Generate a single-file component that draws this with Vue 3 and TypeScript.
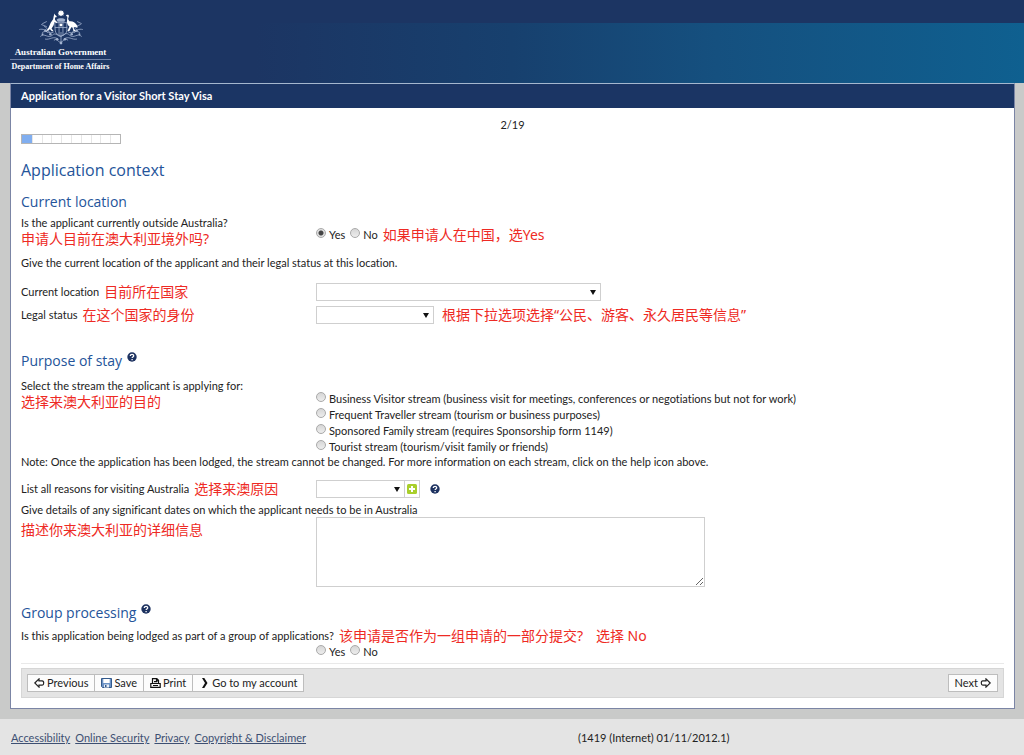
<script setup lang="ts">
import { ref } from 'vue'

const outside = ref('yes')
const stream = ref('')
const group = ref('')
const location = ref('')
const status = ref('')
const reason = ref('')
const details = ref('')

const streams = [
  { id: 'business', label: 'Business Visitor stream (business visit for meetings, conferences or negotiations but not for work)' },
  { id: 'frequent', label: 'Frequent Traveller stream (tourism or business purposes)' },
  { id: 'family', label: 'Sponsored Family stream (requires Sponsorship form 1149)' },
  { id: 'tourist', label: 'Tourist stream (tourism/visit family or friends)' },
]
const footerLinks = ['Accessibility', 'Online Security', 'Privacy', 'Copyright & Disclaimer']
</script>

<template>
  <div class="page">
    <header class="banner">
      <div class="brand">
        <svg class="crest" viewBox="0 0 48 36" aria-hidden="true">
          <g fill="none" stroke="#a3b3cf" stroke-width="0.8" stroke-linecap="round">
            <path d="M3 27c4-4 8 3 12-1s6 2 9 1 5-5 9-1 8-3 12 1M5 23c4-3 7 2 11 0M43 23c-4-3-7 2-11 0M2 20c4-1 6 1 8 3M46 20c-4-1-6 1-8 3M7 17c2 1 4 3 5 6M41 17c-2 1-4 3-5 6M8 30c5 1 8-4 13 0M40 30c-5 1-8-4-13 0M24 23v11M17 31c3-3 4 3 7 2s4-5 7-2M4 15l5 2M44 15l-5 2M41 12l4 2M9 12l-4 2" />
            <path d="M18 13h12v8c0 3-3 5-6 6-3-1-6-3-6-6zM18 18h12M22 13v13M26 13v13" />
          </g>
          <g fill="#a3b3cf">
            <circle cx="8" cy="21" r="1.3" /><circle cx="13" cy="25" r="1.3" /><circle cx="40" cy="21" r="1.3" />
            <circle cx="35" cy="25" r="1.3" /><circle cx="20" cy="30" r="1.3" /><circle cx="28" cy="30" r="1.3" />
            <circle cx="24" cy="34" r="1.4" /><circle cx="5" cy="25" r="1" /><circle cx="43" cy="25" r="1" />
            <path d="M19.500 10c2-2 7-2 9 0l-1 2h-7z" /><circle cx="24" cy="15.500" r="1.500" fill="#fff" />
          </g>
          <path fill="#fff" d="M24 0l.8 1.200 1.500-.4-.2 1.500 1.300.8-1.100 1 .4 1.500-1.600-.2-1.100 1.100-1.100-1.100-1.600.2.4-1.500-1.100-1 1.300-.8-.2-1.500 1.500.4z" />
          <path fill="#fff" d="M17.300 3.500l.7 1.700 1.600 1.300-.3.900-1.500.2.1 2.700 2.300 2.300-.4.700-2.500-1-.9 3.500-2.100 3.200 2.100 2.800h-1.800l-2-2-4.100 2.500 2.800-4.300 2.100-4.800 2.500-3.700.6-3z" />
          <path fill="#fff" d="M29 5.800l1-1 1.500.1.700 1-.9 3.400 1.300 2.300c2.900-.7 5.900 1 7.700 3.900l.7 2.800-2.400-.9-1.500.6.3 1.800 2 2.100h-2.300l-1.300-3.900-1.200-.2-2.100 4.100h-1.900l2.100-4.800c-1.900-1.700-2.700-3.600-2.600-5.600l.5-4.600z" />
        </svg>
        <span class="gov">Australian Government</span>
        <span class="dept">Department of Home Affairs</span>
      </div>
    </header>

    <main class="panel">
      <div class="panel-title">Application for a Visitor Short Stay Visa</div>
      <form class="content" @submit.prevent>
        <div class="count">2/19</div>
        <div class="progress" role="progressbar" aria-label="Progress" aria-valuenow="2" aria-valuemax="19">
          <i v-for="n in 10" :key="n" :class="{ done: n === 1 }"></i>
        </div>
        <h1>Application context</h1>

        <h2>Current location</h2>
        <div class="row outside" role="radiogroup" aria-labelledby="q-outside">
          <div>
            <div id="q-outside">Is the applicant currently outside Australia?</div>
            <div class="note">申请人目前在澳大利亚境外吗?</div>
          </div>
          <div class="options">
            <label><input v-model="outside" type="radio" name="outside" value="yes" />Yes</label>
            <label><input v-model="outside" type="radio" name="outside" value="no" />No</label>
            <span class="note">如果申请人在中国，选Yes</span>
          </div>
        </div>
        <p class="give">Give the current location of the applicant and their legal status at this location.</p>
        <div class="row location">
          <div class="caption"><label for="location">Current location</label><span class="note">目前所在国家</span></div>
          <div class="select wide"><select id="location" v-model="location"><option value=""></option></select></div>
        </div>
        <div class="row status">
          <div class="caption"><label for="status">Legal status</label><span class="note">在这个国家的身份</span></div>
          <div class="field">
            <div class="select medium"><select id="status" v-model="status"><option value=""></option></select></div>
            <span class="note">根据下拉选项选择“公民、游客、永久居民等信息”</span>
          </div>
        </div>

        <h2 class="purpose">
          Purpose of stay
          <button type="button" class="help" aria-label="Help"><svg viewBox="0 0 10 10"><circle cx="5" cy="5" r="4.700" fill="#1d3260" /><path d="M3.300 4C3.300 1.800 6.800 1.900 6.700 3.900 6.600 5 5.100 4.900 5.100 6.100M5.100 7v1.200" fill="none" stroke="#fff" stroke-width="1.300" /></svg></button>
        </h2>
        <div class="row streams" role="radiogroup" aria-labelledby="q-stream">
          <div>
            <div id="q-stream">Select the stream the applicant is applying for:</div>
            <div class="note">选择来澳大利亚的目的</div>
          </div>
          <div class="stream-list">
            <label v-for="s in streams" :key="s.id"><input v-model="stream" type="radio" name="stream" :value="s.id" />{{ s.label }}</label>
          </div>
        </div>
        <p class="remark">Note: Once the application has been lodged, the stream cannot be changed. For more information on each stream, click on the help icon above.</p>
        <div class="row reasons">
          <div class="caption"><label for="reason">List all reasons for visiting Australia</label><span class="note">选择来澳原因</span></div>
          <div class="field reason-field">
            <div class="select small"><select id="reason" v-model="reason"><option value=""></option></select></div>
            <button type="button" class="add" aria-label="Add reason"><svg viewBox="0 0 10 10"><rect width="10" height="10" rx="1.500" fill="#a9cf2b" /><path d="M5 2v6M2 5h6" stroke="#fff" stroke-width="2" /></svg></button>
            <button type="button" class="help" aria-label="Help"><svg viewBox="0 0 10 10"><circle cx="5" cy="5" r="4.700" fill="#1d3260" /><path d="M3.300 4C3.300 1.800 6.800 1.900 6.700 3.900 6.600 5 5.100 4.900 5.100 6.100M5.100 7v1.200" fill="none" stroke="#fff" stroke-width="1.300" /></svg></button>
          </div>
        </div>
        <label class="details-label" for="details">Give details of any significant dates on which the applicant needs to be in Australia</label>
        <div class="row details">
          <div class="note">描述你来澳大利亚的详细信息</div>
          <textarea id="details" v-model="details"></textarea>
        </div>

        <h2 class="group">
          Group processing
          <button type="button" class="help" aria-label="Help"><svg viewBox="0 0 10 10"><circle cx="5" cy="5" r="4.700" fill="#1d3260" /><path d="M3.300 4C3.300 1.800 6.800 1.900 6.700 3.900 6.600 5 5.100 4.900 5.100 6.100M5.100 7v1.200" fill="none" stroke="#fff" stroke-width="1.300" /></svg></button>
        </h2>
        <div class="caption group-question">
          <span id="q-group">Is this application being lodged as part of a group of applications?</span>
          <span class="note">该申请是否作为一组申请的一部分提交?</span>
          <span class="note choice">选择 No</span>
        </div>
        <div class="row" role="radiogroup" aria-labelledby="q-group">
          <span></span>
          <div class="options">
            <label><input v-model="group" type="radio" name="group" value="yes" />Yes</label>
            <label><input v-model="group" type="radio" name="group" value="no" />No</label>
          </div>
        </div>
        <hr />
        <div class="toolbar">
          <div class="buttons">
            <button type="button"><svg viewBox="0 0 11 10"><path d="M.8 5L5 .9v2h3.200q1.500 0 1.500 2.100T8.200 7.100H5v2z" fill="#fff" stroke="#222" stroke-width="1.200" /></svg>Previous</button>
            <button type="button"><svg viewBox="0 0 11 10"><path d="M.5 .5h10v9H1.500l-1-1z" fill="#6b92c6" stroke="#33598b" /><path d="M2.300 1h6.400v4H2.300z" fill="#fff" /><path d="M3 6.500h5v3H3z" fill="#e8eff7" /><path d="M4 7h1.500v2H4z" fill="#33598b" /></svg>Save</button>
            <button type="button"><svg viewBox="0 0 11 10"><path d="M2.500 5.500V.6h4.300L8.500 2.300v3.200M6.500.8v2h2M.8 9.400V5.500h9.400v3.900zM3 7.500h5M4 3.700h3" fill="none" stroke="#111" stroke-width="1.200" /></svg>Print</button>
            <button type="button"><svg viewBox="0 0 11 10"><path d="M3 0h2.300L8.500 5 5.300 10H3L6 5z" fill="#111" /></svg>Go to my account</button>
          </div>
          <div class="buttons">
            <button type="button">Next<svg viewBox="0 0 11 10"><path d="M10.200 5L6 .9v2H2.800Q1.300 2.900 1.300 5t1.500 2.100H6v2z" fill="#fff" stroke="#222" stroke-width="1.200" /></svg></button>
          </div>
        </div>
      </form>
    </main>

    <footer>
      <nav><a v-for="l in footerLinks" :key="l" href="#">{{ l }}</a></nav>
      <span>(1419 (Internet) 01/11/2012.1)</span>
    </footer>
  </div>
</template>

<style>
body {
  margin: 0;
  background: #c9cac9;
}
</style>

<style scoped>
* {
  box-sizing: border-box;
}
.page {
  min-height: 100vh;
  display: flex;
  flex-direction: column;
  background: #c9cac9;
  color: #222;
  font: 11px/16px Lato, "Noto Sans", "Noto Sans CJK SC", sans-serif;
  font-variant-ligatures: none;
}
.banner {
  padding: 10px 10px 9px;
  background:
    linear-gradient(#1c3563, #1c3563) top / 100% 23px no-repeat,
    linear-gradient(90deg, #1c3563 25%, #17406e 50%, #15507f 70%, #0f6090 100%);
}
.brand {
  width: 101px;
  display: flex;
  flex-direction: column;
  align-items: center;
  color: #fff;
  font: bold 8px/14px "Liberation Serif", serif;
  white-space: nowrap;
}
.crest {
  width: 48px;
  height: 35px;
}
.gov {
  width: 100%;
  text-align: center;
  font-size: 9px;
  border-bottom: 1px solid #6d80a5;
}
.panel {
  margin: 0 9px 10px 10px;
  background: #fff;
  border: 1px solid #7b85a5;
  border-top-color: #a5b7ce;
}
.panel-title {
  padding: 4px 10px;
  background: #1b3564;
  color: #fff;
  font-weight: bold;
}
.content {
  padding: 9px 10px 10px;
}
.count {
  text-align: center;
}
.progress {
  width: 100px;
  height: 10px;
  margin-top: 1px;
  display: flex;
  border: 1px solid #b5b5b5;
}
.progress i {
  flex: 1;
  border-left: 1px solid #e6e6e6;
}
.progress .done {
  background: #80aef0;
  border-color: #80aef0;
}
h1,
h2 {
  margin: 0;
  color: #24549a;
  font-family: "Open Sans", sans-serif;
  font-weight: normal;
}
h1 {
  margin-top: 14px;
  font-size: 16px;
  line-height: 24px;
}
h2 {
  margin-top: 10px;
  font-size: 14px;
  line-height: 20px;
  display: flex;
  gap: 5px;
}
p {
  margin: 0;
}
.row {
  display: grid;
  grid-template-columns: 295px 1fr;
}
.note {
  color: #ee2a24;
  font-family: "Noto Sans", "Noto Sans CJK SC", sans-serif;
  font-size: 14px;
  white-space: nowrap;
}
.caption,
.field {
  display: flex;
  align-items: center;
  gap: 5px;
}
.field {
  gap: 8px;
}
.options {
  display: flex;
  gap: 5px;
}
label {
  white-space: nowrap;
}
.options label,
.stream-list label {
  display: flex;
  gap: 3px;
}
input[type="radio"] {
  appearance: none;
  flex: none;
  width: 10px;
  height: 10px;
  margin: 1px 0 0;
  border: 1px solid #a9a9a9;
  border-radius: 50%;
  background: linear-gradient(#d6d6d6, #ededed);
}
input[type="radio"]:checked {
  background: radial-gradient(circle, #444 0 2px, #e0e0e0 3px);
}
.outside {
  margin-top: 3px;
}
.outside .options {
  padding-top: 12px;
}
.give {
  margin-top: 8px;
}
.location {
  margin-top: 12px;
}
.status {
  margin-top: 5px;
}
.select {
  position: relative;
  height: 18px;
}
.select::after {
  content: "";
  position: absolute;
  right: 5px;
  top: 7px;
  border: 3px solid transparent;
  border-top: 5px solid #111;
  border-bottom: 0;
  pointer-events: none;
}
select,
textarea {
  display: block;
  width: 100%;
  height: 100%;
  margin: 0;
  appearance: none;
  background: #fff;
  border: 1px solid #cfcfcf;
  border-radius: 0;
  font: inherit;
}
.wide {
  width: 285px;
}
.medium {
  width: 118px;
}
.small {
  width: 89px;
}
.purpose {
  margin-top: 27px;
}
.help,
.add {
  padding: 0;
  border: 0;
  background: none;
}
.help {
  width: 10px;
  height: 10px;
}
h2 .help {
  margin-top: 1px;
}
.help svg,
.add svg {
  display: block;
  width: 10px;
  height: 10px;
}
.streams {
  margin-top: 7px;
}
.stream-list {
  padding-top: 13px;
}
.remark {
  line-height: 14px;
}
.reasons {
  margin-top: 11px;
}
.reason-field {
  gap: 0;
}
.add {
  width: 15px;
  height: 18px;
  padding: 2px;
  border: 1px solid #cfcfcf;
  border-left: 0;
}
.reason-field .help {
  margin-left: 10px;
}
.details-label {
  display: block;
  margin-top: 5px;
  line-height: 14px;
}
.details .note {
  padding-top: 5px;
}
textarea {
  width: 389px;
  max-width: 100%;
  height: 70px;
  resize: both;
}
.group {
  margin-top: 16px;
}
.group-question {
  margin-top: 5px;
}
.choice {
  margin-left: 8px;
}
hr {
  margin: 3px 0 4px;
  border: 0;
  border-top: 1px solid #e9e9e9;
}
.toolbar {
  display: flex;
  justify-content: space-between;
  padding: 5px;
  background: #e4e4e4;
  border: 1px solid #d6d6d6;
}
.buttons {
  display: flex;
}
.buttons button {
  display: flex;
  align-items: center;
  gap: 2px;
  height: 18px;
  padding: 0 6px;
  background: #fcfcfc;
  border: 1px solid #bdbdbd;
  color: #222;
  font: inherit;
  white-space: nowrap;
}
.buttons button + button {
  border-left: 0;
}
.buttons svg {
  width: 11px;
  height: 10px;
}
footer {
  flex: 1;
  display: grid;
  grid-template-columns: 567px 1fr;
  padding: 11px 11px 9px;
  background: #e4e4e4;
}
nav {
  display: flex;
  gap: 5px;
}
a {
  color: #3d4f72;
}
</style>
